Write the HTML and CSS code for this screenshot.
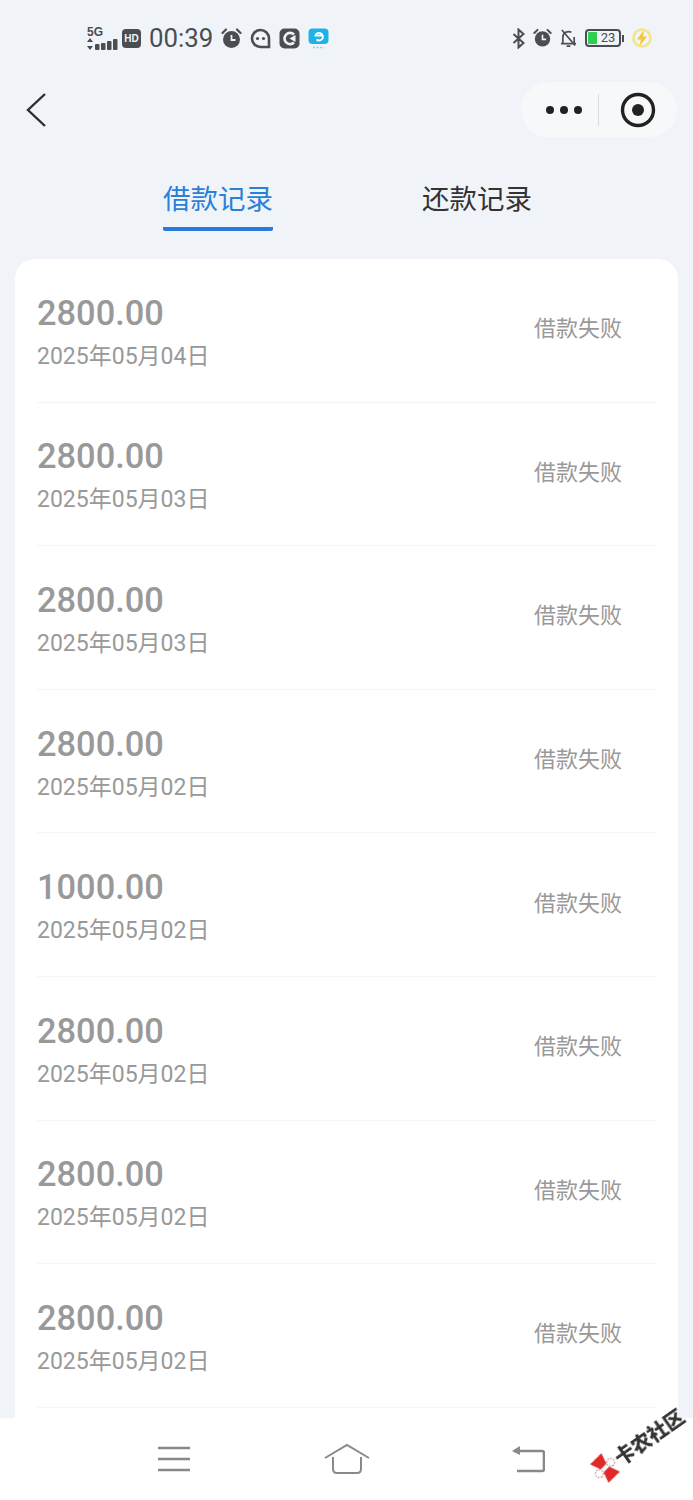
FILE: index.html
```html
<!DOCTYPE html>
<html lang="zh-CN">
<head>
    <meta charset="UTF-8">
    <meta name="viewport" content="width=device-width, initial-scale=1.0">
    <title>借款记录</title>
    <link rel="stylesheet" href="styles.css">
</head>
<body>
    <div class="page">
        <!-- 状态栏 -->
        <div class="status-bar">
            <div class="status-left">
                <div class="signal">
                    <span class="signal-label">5G</span>
                    <svg width="31" height="12" viewBox="0 0 31 12">
                        <path d="M3 0 L6 4 H0 Z M3 12 L0 8 H6 Z" fill="#4a4d52"/>
                        <rect x="8" y="6" width="4.5" height="6" rx="1" fill="#4a4d52"/>
                        <rect x="14" y="5" width="4.5" height="7" rx="1" fill="#4a4d52"/>
                        <rect x="20" y="3" width="4.5" height="9" rx="1" fill="#4a4d52"/>
                        <rect x="26" y="1" width="4.5" height="11" rx="1" fill="#4a4d52"/>
                    </svg>
                </div>
                <span class="hd-badge">HD</span>
                <span class="clock">00:39</span>
                <svg width="21" height="21" viewBox="0 0 21 21">
                    <circle cx="10.5" cy="11.5" r="8.5" fill="#4a4d52"/>
                    <path d="M1.5 5 L5 1.5 M19.5 5 L16 1.5" stroke="#4a4d52" stroke-width="2.2" stroke-linecap="round"/>
                    <path d="M10.5 7 V12 H14.5" stroke="#f0f4f9" stroke-width="1.8" fill="none"/>
                </svg>
                <svg width="21" height="21" viewBox="0 0 21 21">
                    <path d="M10.5 2 A8.5 8.5 0 1 0 10.5 19 H19 V10.5 A8.5 8.5 0 0 0 10.5 2 Z" fill="none" stroke="#4a4d52" stroke-width="2.6"/>
                    <circle cx="7.5" cy="10.5" r="1.6" fill="#4a4d52"/>
                    <circle cx="13.5" cy="10.5" r="1.6" fill="#4a4d52"/>
                </svg>
                <svg width="21" height="21" viewBox="0 0 21 21">
                    <rect x="0.5" y="0.5" width="20" height="20" rx="5" fill="#4a4d52"/>
                    <path d="M15 6.5 A5.6 5.6 0 1 0 15 14.5" fill="none" stroke="#f0f4f9" stroke-width="2.6"/>
                    <path d="M10.5 10.5 L16.5 7 V14 Z" fill="#f0f4f9"/>
                </svg>
                <svg width="21" height="21" viewBox="0 0 21 21">
                    <rect x="0.5" y="0.5" width="20" height="15.5" rx="4" fill="#1fb2e8"/>
                    <path d="M14.5 7.5 H7.5 A3.8 3.8 0 1 1 8.5 11.5 C10.5 13 13 12.5 14.5 10.5" fill="none" stroke="#fff" stroke-width="1.8"/>
                    <path d="M5 19.5 H16" stroke="#7fd4f2" stroke-width="1.6" stroke-dasharray="2 1.5"/>
                </svg>
            </div>
            <div class="status-right">
                <svg width="13" height="21" viewBox="0 0 13 21">
                    <path d="M1.5 6 L11.5 15 L6.5 19.5 V1.5 L11.5 6 L1.5 15" fill="none" stroke="#4a4d52" stroke-width="2"/>
                </svg>
                <svg width="19" height="20" viewBox="0 0 21 21">
                    <circle cx="10.5" cy="11.5" r="8.5" fill="#4a4d52"/>
                    <path d="M1.5 5 L5 1.5 M19.5 5 L16 1.5" stroke="#4a4d52" stroke-width="2.2" stroke-linecap="round"/>
                    <path d="M10.5 7 V12 H14.5" stroke="#f0f4f9" stroke-width="1.8" fill="none"/>
                </svg>
                <svg width="17" height="20" viewBox="0 0 18 20">
                    <path d="M3 15 V9 A6 6 0 0 1 12 4 M15 9 V15 M1 16 H17 M7 18.5 H11" fill="none" stroke="#4a4d52" stroke-width="1.8"/>
                    <path d="M2 1.5 L16 18" stroke="#4a4d52" stroke-width="1.8"/>
                </svg>
                <div class="battery">
                    <div class="battery-body">
                        <span class="battery-fill"></span>
                        <span class="battery-num">23</span>
                    </div>
                    <span class="battery-cap"></span>
                </div>
                <svg width="20" height="22" viewBox="0 0 20 22">
                    <circle cx="10" cy="11" r="8.5" fill="none" stroke="#f5e48e" stroke-width="2.6"/>
                    <path d="M12 3 L5 12.5 H9 L7.5 19 L15 9.5 H11 Z" fill="#f3c92e"/>
                </svg>
            </div>
        </div>

        <!-- 标题栏 -->
        <div class="nav-bar">
            <svg width="22" height="36" viewBox="0 0 22 36">
                <path d="M20 2 L3 18 L20 34" fill="none" stroke="#2b2d30" stroke-width="2.4"/>
            </svg>
            <div class="capsule">
                <div class="dots"><i></i><i></i><i></i></div>
                <span class="capsule-line"></span>
                <svg width="36" height="36" viewBox="0 0 36 36">
                    <circle cx="18" cy="18" r="15.5" fill="none" stroke="#222" stroke-width="3.4"/>
                    <circle cx="18" cy="18" r="6" fill="#222"/>
                </svg>
            </div>
        </div>

        <!-- 选项卡 -->
        <div class="tabs">
            <div class="tab active">借款记录</div>
            <div class="tab">还款记录</div>
        </div>

        <!-- 记录列表 -->
        <div class="card">
            <div class="row">
                <div class="row-info"><div class="amount">2800.00</div><div class="date">2025年05月04日</div></div>
                <div class="state">借款失败</div>
            </div>
            <div class="row">
                <div class="row-info"><div class="amount">2800.00</div><div class="date">2025年05月03日</div></div>
                <div class="state">借款失败</div>
            </div>
            <div class="row">
                <div class="row-info"><div class="amount">2800.00</div><div class="date">2025年05月03日</div></div>
                <div class="state">借款失败</div>
            </div>
            <div class="row">
                <div class="row-info"><div class="amount">2800.00</div><div class="date">2025年05月02日</div></div>
                <div class="state">借款失败</div>
            </div>
            <div class="row">
                <div class="row-info"><div class="amount">1000.00</div><div class="date">2025年05月02日</div></div>
                <div class="state">借款失败</div>
            </div>
            <div class="row">
                <div class="row-info"><div class="amount">2800.00</div><div class="date">2025年05月02日</div></div>
                <div class="state">借款失败</div>
            </div>
            <div class="row">
                <div class="row-info"><div class="amount">2800.00</div><div class="date">2025年05月02日</div></div>
                <div class="state">借款失败</div>
            </div>
            <div class="row">
                <div class="row-info"><div class="amount">2800.00</div><div class="date">2025年05月02日</div></div>
                <div class="state">借款失败</div>
            </div>
        </div>
    </div>

    <!-- 手机底部导航 -->
    <div class="phone-nav">
        <svg width="34" height="28" viewBox="0 0 34 28">
            <path d="M1 3 H33 M1 14 H33 M1 25 H33" stroke="#88898b" stroke-width="2.6"/>
        </svg>
        <svg class="nav-home" width="46" height="32" viewBox="0 0 46 32">
            <path d="M1 15 L23 2 L45 15" fill="none" stroke="#88898b" stroke-width="2"/>
            <path d="M9 14 V26 Q9 30 13 30 H33 Q37 30 37 26 V14" fill="none" stroke="#88898b" stroke-width="2"/>
        </svg>
        <svg width="34" height="28" viewBox="0 0 34 28">
            <path d="M3 6 H31 Q33 6 33 8 V24 Q33 26 31 26 H6" fill="none" stroke="#88898b" stroke-width="2.6"/>
            <path d="M1 6 L9 1 V10 Z" fill="#88898b"/>
        </svg>
    </div>

    <!-- 水印 -->
    <div class="watermark">
        <svg width="28" height="28" viewBox="0 0 28 28">
            <g transform="rotate(80 14 14)">
                <path d="M1 6 L12 10 L12 18 L1 22 Z M27 6 L16 10 L16 18 L27 22 Z" fill="#e02a2a"/>
                <circle cx="14" cy="6" r="4" fill="#fff" stroke="#b66" stroke-width="1" stroke-dasharray="1.5 1.5"/>
                <circle cx="14" cy="22" r="4" fill="#fff" stroke="#b66" stroke-width="1" stroke-dasharray="1.5 1.5"/>
            </g>
        </svg>
        <span>卡农社区</span>
    </div>
</body>
</html>
```

FILE: styles.css
```css
* {
    box-sizing: border-box;
}

html, body {
    margin: 0;
    padding: 0;
    height: 1500px;
    overflow: hidden;
}

body {
    font-family: "Noto Sans CJK SC", "Noto Sans", sans-serif;
    background-color: #f0f4f9;
    color: #333;
}

.page {
    height: 1500px;
    overflow: hidden;
}

.status-bar {
    display: flex;
    justify-content: space-between;
    align-items: center;
    height: 76px;
    padding: 0 41px 0 87px;
}

.status-left, .status-right {
    display: flex;
    align-items: center;
    gap: 8px;
}

.signal {
    display: flex;
    flex-direction: column;
    width: 31px;
    margin-right: -4px;
    font-family: "Liberation Sans", sans-serif;
}

.signal-label {
    font-size: 12px;
    font-weight: 700;
    line-height: 12px;
    color: #4a4d52;
}

.hd-badge {
    display: flex;
    align-items: center;
    justify-content: center;
    width: 19px;
    height: 19px;
    border-radius: 4px;
    background-color: #4a4d52;
    color: #f0f4f9;
    font-family: "Liberation Sans", sans-serif;
    font-size: 10px;
    font-weight: 700;
}

.clock {
    font-family: Roboto, sans-serif;
    font-size: 25.8px;
    color: #4a4d52;
}

.battery {
    display: flex;
    align-items: center;
}

.battery-body {
    position: relative;
    width: 36px;
    height: 18px;
    border: 2px solid #4a4d52;
    border-radius: 4px;
}

.battery-fill {
    position: absolute;
    left: 1px;
    top: 1px;
    bottom: 1px;
    width: 9px;
    background-color: #2fcf4f;
    border-radius: 1px;
}

.battery-num {
    position: absolute;
    left: 10px;
    right: 0;
    top: 0;
    text-align: center;
    font-family: Roboto, sans-serif;
    font-size: 13px;
    line-height: 14px;
    color: #4a4d52;
}

.battery-cap {
    width: 2px;
    height: 7px;
    margin-left: 1px;
    background-color: #4a4d52;
}

.nav-bar {
    display: flex;
    justify-content: space-between;
    align-items: center;
    height: 67px;
    padding: 0 16px 0 25px;
}

.capsule {
    display: flex;
    align-items: center;
    width: 156px;
    height: 55px;
    padding-left: 25px;
    border-radius: 28px;
    background-color: #f7f8fa;
}

.dots {
    display: flex;
    gap: 6px;
}

.dots i {
    display: block;
    width: 8px;
    height: 8px;
    border-radius: 50%;
    background-color: #222;
}

.capsule-line {
    width: 1px;
    height: 32px;
    margin: 0 21px 0 16px;
    background-color: #dcdcdc;
}

.tabs {
    display: flex;
    gap: 149px;
    height: 116px;
    padding: 33px 0 0 163px;
}

.tab {
    height: 55px;
    font-size: 27.5px;
    line-height: 42px;
    color: #333;
    border-bottom: 4px solid transparent;
}

.tab.active {
    color: #2a7fd8;
    border-bottom-color: #2a79dc;
    border-radius: 0 0 2px 2px;
}

.card {
    margin: 0 15px;
    padding: 0 22px 40px;
    border-radius: 20px;
    background-color: #fff;
}

.row {
    display: flex;
    justify-content: space-between;
    align-items: center;
    height: 143.6px;
    padding: 0 34px 1px 0;
    border-bottom: 1px solid #f5f5f5;
}

.row-info {
    margin-top: 2px;
}

.amount {
    font-family: Roboto, sans-serif;
    font-size: 34.4px;
    font-weight: 500;
    line-height: 48px;
    color: #999;
}

.date {
    margin-top: 4px;
    font-family: Roboto, "Noto Sans CJK SC", sans-serif;
    font-size: 23px;
    line-height: 32px;
    color: #999;
}

.state {
    margin-bottom: 7px;
    font-size: 22px;
    color: #999;
}

.phone-nav {
    position: fixed;
    left: 0;
    right: 0;
    bottom: 0;
    height: 82px;
    padding-left: 157px;
    display: flex;
    align-items: center;
    background-color: #fff;
}

.nav-home {
    margin: 0 141px 0 133px;
}

.watermark {
    position: fixed;
    left: 591px;
    top: 1454px;
    display: flex;
    align-items: center;
    transform: rotate(-35deg);
    transform-origin: 14px 14px;
    font-size: 20px;
    line-height: 28px;
    font-weight: 900;
    color: #333;
    white-space: nowrap;
}
```
